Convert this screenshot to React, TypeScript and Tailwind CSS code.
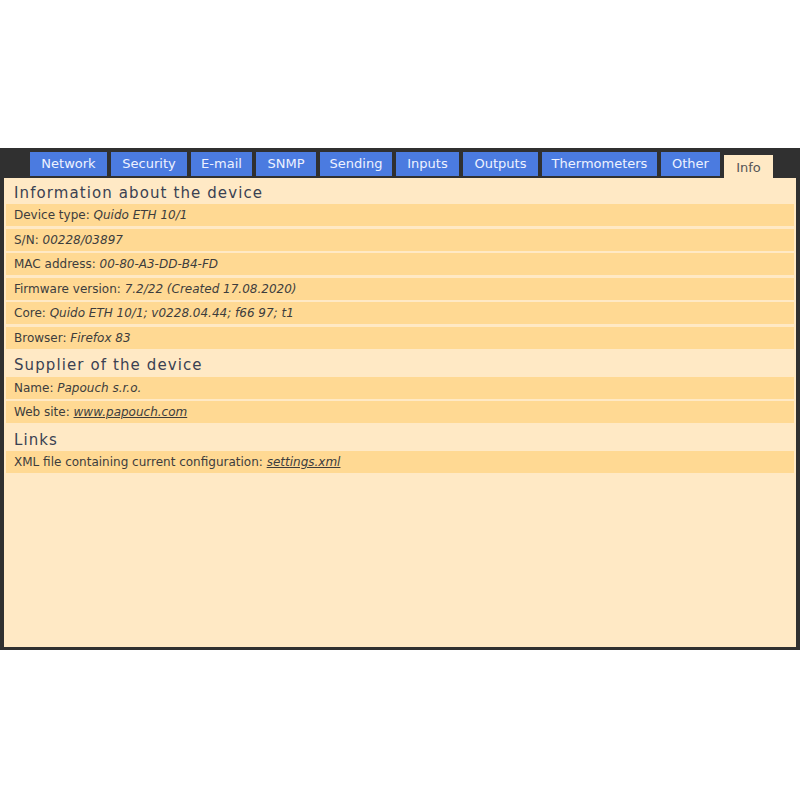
import React from 'react';

const tabs: { name: string; w: string }[] = [
  { name: 'Network', w: 'w-[77px]' },
  { name: 'Security', w: 'w-[76px]' },
  { name: 'E-mail', w: 'w-[61px]' },
  { name: 'SNMP', w: 'w-[60px]' },
  { name: 'Sending', w: 'w-[72px]' },
  { name: 'Inputs', w: 'w-[63px]' },
  { name: 'Outputs', w: 'w-[75px]' },
  { name: 'Thermometers', w: 'w-[115px]' },
  { name: 'Other', w: 'w-[59px]' },
];

interface Row {
  label: string;
  value: string;
  link?: boolean;
}

const sections: { title: string; rows: Row[] }[] = [
  {
    title: 'Information about the device',
    rows: [
      { label: 'Device type:', value: 'Quido ETH 10/1' },
      { label: 'S/N:', value: '00228/03897' },
      { label: 'MAC address:', value: '00-80-A3-DD-B4-FD' },
      { label: 'Firmware version:', value: '7.2/22 (Created 17.08.2020)' },
      { label: 'Core:', value: 'Quido ETH 10/1; v0228.04.44; f66 97; t1' },
      { label: 'Browser:', value: 'Firefox 83' },
    ],
  },
  {
    title: 'Supplier of the device',
    rows: [
      { label: 'Name:', value: 'Papouch s.r.o.' },
      { label: 'Web site:', value: 'www.papouch.com', link: true },
    ],
  },
  {
    title: 'Links',
    rows: [{ label: 'XML file containing current configuration:', value: 'settings.xml', link: true }],
  },
];

function InfoRow({ row, first }: { row: Row; first: boolean }) {
  return (
    <div className={`mx-[2px] h-[22px] bg-[#ffd993] pl-[8px] flex items-center text-[12px] text-[#3d3d3d] whitespace-nowrap ${first ? '' : 'mt-[2.5px]'}`}>
      <span>{row.label}&nbsp;</span>
      <span className={`italic ${row.link ? 'underline' : ''}`}>{row.value}</span>
    </div>
  );
}

export default function App() {
  return (
    <div className="min-h-[800px] bg-white pt-[148px]" style={{ fontFamily: '"DejaVu Sans", sans-serif' }}>
      <div className="h-[502px] bg-[#303030] px-[4px] pb-[3px] pt-[4px] flex flex-col">
        {/* tabs */}
        <div className="flex items-end gap-[4px] pl-[26px] h-[26px]">
          {tabs.map(t => (
            <div key={t.name} className={`${t.w} h-[24px] mb-[2px] bg-[#4b7be0] text-[#eef2ff] text-[13px] flex items-center justify-center whitespace-nowrap`}>
              {t.name}
            </div>
          ))}
          <div className="w-[49px] h-[23px] bg-[#ffe9c5] text-[#555] text-[13px] flex items-center justify-center pt-[3px]">Info</div>
        </div>

        {/* content */}
        <div className="flex-1 bg-[#ffe9c5]">
          {sections.map((s, i) => (
            <div key={s.title}>
              <div className={`${i === 0 ? 'h-[26px] pt-[4px]' : 'h-[28px] pt-[6px]'} pl-[10px] flex items-center text-[15px] tracking-[1.1px] text-[#3a4152] whitespace-nowrap`}>
                {s.title}
              </div>
              {s.rows.map((r, j) => (
                <InfoRow key={r.label} row={r} first={j === 0} />
              ))}
            </div>
          ))}
        </div>
      </div>
    </div>
  );
}
